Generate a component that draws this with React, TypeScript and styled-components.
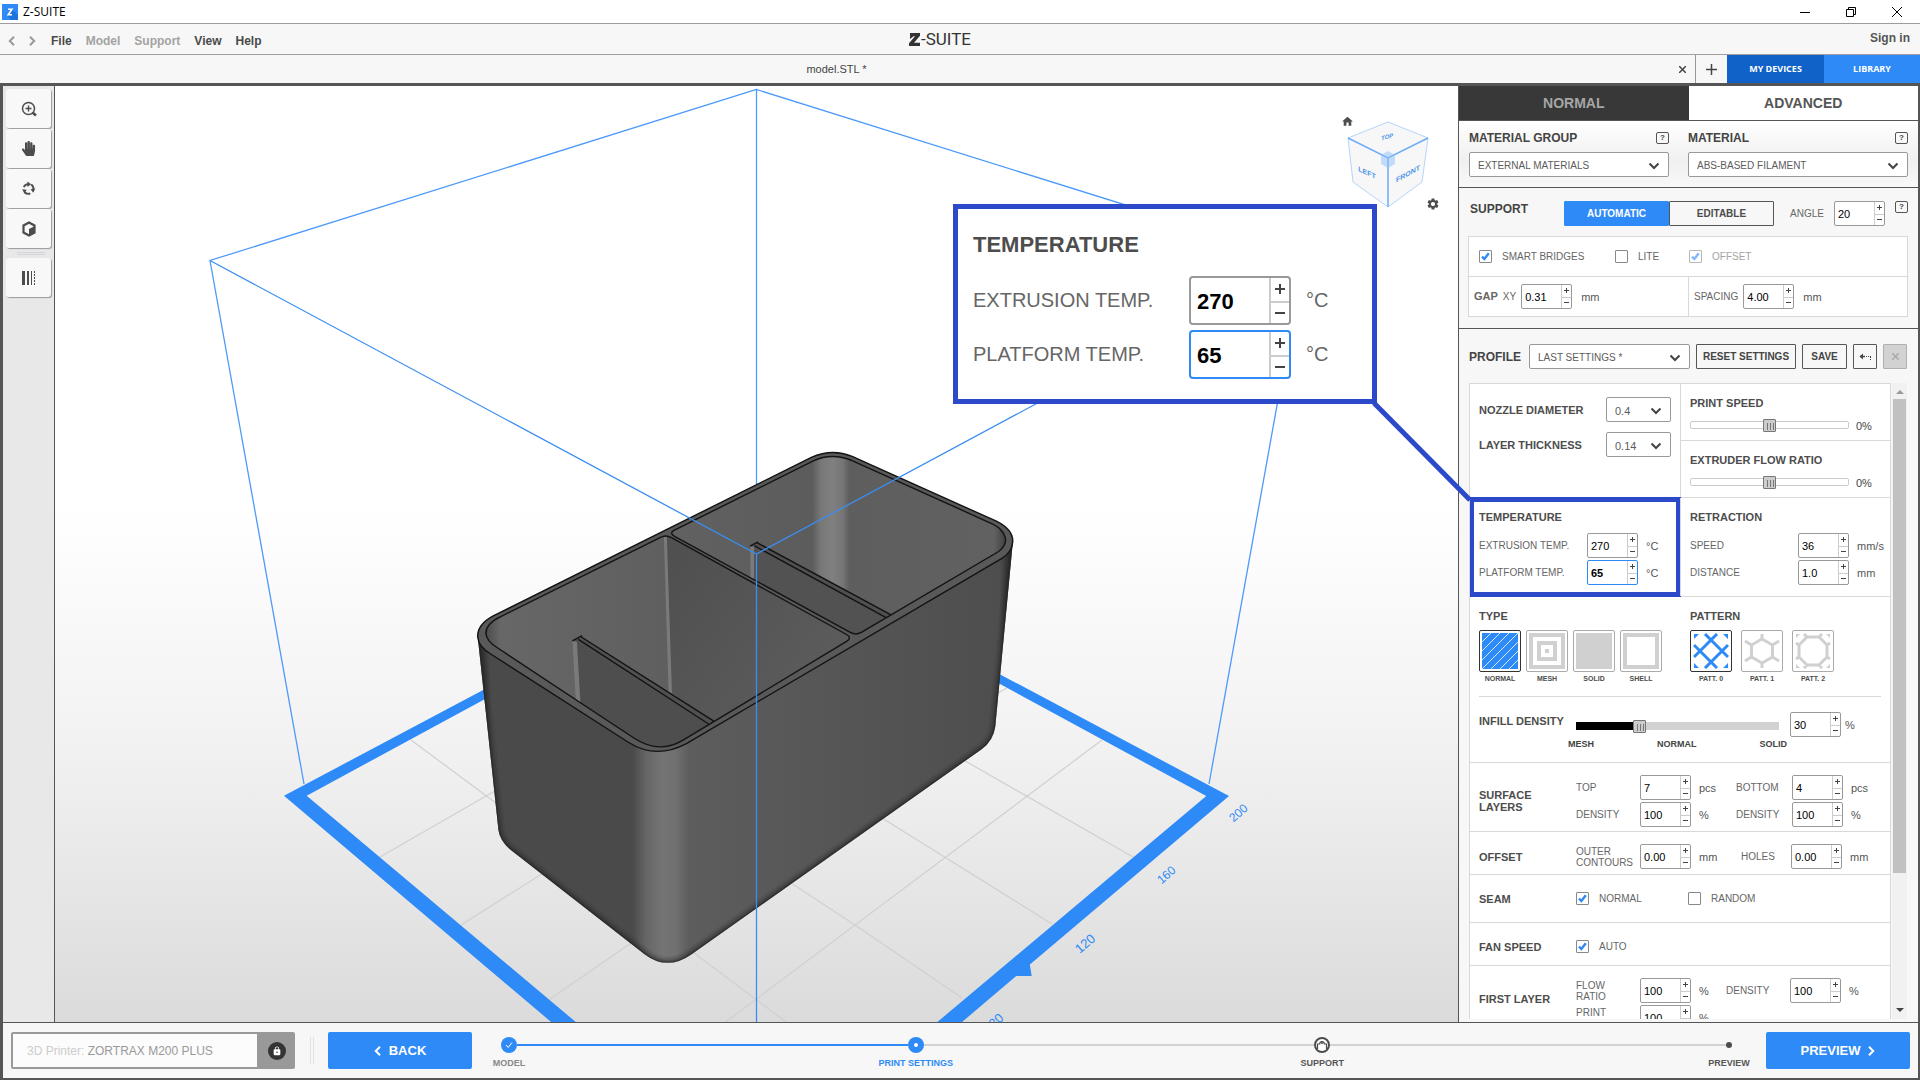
import React, { useId } from "react";
import styled, { createGlobalStyle, css } from "styled-components";
import { MdHome, MdSettings, MdLock } from "react-icons/md";
import { FaHandPaper } from "react-icons/fa";

const blue = "#2e8af7";
const navy = "#2b49c8";
const ink = "#444";
const frame = "#555";
const rule = "#d9d9d9";

const Global = createGlobalStyle`
  *, *::before, *::after { box-sizing: border-box; }
  body { margin: 0; background: #f7f7f7; }
  body, button, input, select { font-family: "Liberation Sans", Arial, sans-serif; }
  button { padding: 0; margin: 0; border: 0; background: none; color: inherit; cursor: pointer; }
`;

/* ---------- Window frame ---------- */

const Window = styled.div`
  display: flex;
  flex-direction: column;
  height: 100vh;
  overflow: hidden;
  color: ${ink};
  font-size: 11px;
`;

const TitleBar = styled.header`
  display: flex;
  align-items: center;
  flex: none;
  height: 24px;
  padding-left: 2px;
  gap: 5px;
  background: #fff;
  border-bottom: 1px solid #9c9c9c;
`;

const WindowTitle = styled.h1`
  flex: 1;
  margin: 0;
  color: #000;
  font: 400 12px/20px "Open Sans", "Noto Sans", sans-serif;
`;

const WindowButtons = styled.div`
  display: flex;
`;

const WindowButton = styled.button`
  display: grid;
  place-items: center;
  width: 46px;
  height: 20px;
`;

const MenuBar = styled.nav`
  display: grid;
  grid-template-columns: 1fr auto 1fr;
  align-items: center;
  flex: none;
  height: 31px;
  padding: 0 10px 0 6px;
  border-bottom: 1px solid #a0a0a0;
`;

const MenuGroup = styled.div`
  display: flex;
  align-items: center;
  gap: 14px;
  padding-top: 4px;
`;

const Arrows = styled.div`
  display: flex;
  gap: 11px;
  color: #999;
`;

const ArrowButton = styled.button`
  display: grid;
  width: 10px;
  height: 14px;
  place-items: center;
`;

const MenuItem = styled.button<{ $muted?: boolean }>`
  font-size: 12px;
  font-weight: 700;
  color: ${(p) => (p.$muted ? "#a3a3a3" : "#4a4a4a")};
`;

const SignIn = styled.a`
  justify-self: end;
  padding-bottom: 2px;
  color: #555;
  font-size: 12px;
  font-weight: 700;
  text-decoration: none;
`;

const Brand = styled.div`
  display: flex;
  align-items: center;
  gap: 1px;
  margin-right: 36px;
  color: #333;
  font: 400 17px/20px Roboto, sans-serif;
`;

const TabBar = styled.div`
  display: flex;
  flex: none;
  height: 28px;
`;

const FileTab = styled.div`
  display: flex;
  align-items: center;
  flex: 1;
  padding-left: 4px;
  border-right: 1px solid #999;
`;

const FileName = styled.button`
  flex: 1;
  height: 100%;
  font-size: 11px;
  color: #444;
`;

const TabIcon = styled.button<{ $w: number }>`
  display: grid;
  place-items: center;
  width: ${(p) => p.$w}px;
  height: 100%;
`;

const TopButton = styled.button<{ $bg: string; $w: number }>`
  width: ${(p) => p.$w}px;
  background: ${(p) => p.$bg};
  color: #fff;
  font: 700 9px/12px "Open Sans", sans-serif;
`;

const Frame = styled.div`
  display: flex;
  flex-direction: column;
  flex: 1;
  min-height: 0;
  border: solid ${frame};
  border-width: 3px 2px 2px 3px;
`;

const Main = styled.main`
  position: relative;
  display: grid;
  grid-template-columns: 52px minmax(0, 1fr) 460px;
  grid-template-rows: minmax(0, 1fr);
  flex: 1;
  min-height: 0;
`;

/* ---------- Left tools ---------- */

const Tools = styled.aside`
  display: flex;
  flex-direction: column;
  gap: 1px;
  padding: 3px;
  background: #e8e8e8;
  border-right: 1px solid ${frame};
`;

const ToolButton = styled.button`
  display: grid;
  place-items: center;
  height: 39px;
  border-radius: 3px;
  background: #f8f8f8;
  box-shadow: 1px 1px 1px #999;
  color: #4d4d4d;
`;

const ToolDivider = styled.div`
  width: 28px;
  height: 3px;
  margin: 3px auto 2px 11px;
  border: solid #d0d4d8;
  border-width: 1px 0;
`;

/* ---------- Viewport ---------- */

const Viewport = styled.section`
  position: relative;
  min-width: 0;
  overflow: hidden;
  background: linear-gradient(#fff 0%, #fff 45%, #f2f2f2 70%, #dbdbdb 100%);
`;

const Scene = styled.svg`
  display: block;
  width: 100%;
  height: 100%;
`;

const CubeWidget = styled.div`
  position: absolute;
  top: 28px;
  right: 18px;
  width: 102px;
  height: 98px;
  color: #4d4d4d;
`;

const CubeButton = styled.button<{ $corner: "home" | "gear" }>`
  position: absolute;
  display: grid;
  ${(p) => (p.$corner === "home" ? "top: 1px; left: 3px;" : "bottom: 1px; right: 0;")}
`;

const Callout = styled.div`
  position: absolute;
  top: 118px;
  right: 81px;
  width: 424px;
  height: 200px;
  padding: 23px 15px;
  border: 5px solid ${navy};
  background: #fff;
`;

const CalloutTitle = styled.h3`
  margin: 0 0 19px;
  font-size: 22px;
  line-height: 25px;
  color: #4d4d4d;
`;

const CalloutRow = styled.div`
  display: grid;
  grid-template-columns: 216px 102px 1fr;
  align-items: center;
  height: 49px;
  margin-bottom: 5px;
  color: #666;
  font-size: 20px;
  white-space: nowrap;
`;

const CalloutUnit = styled.span`
  padding-left: 15px;
  font-size: 20px;
`;

const Connector = styled.svg`
  position: absolute;
  top: 315px;
  right: 446px;
  pointer-events: none;
`;

/* ---------- Right panel ---------- */

const Panel = styled.aside`
  display: flex;
  flex-direction: column;
  min-height: 0;
  border-left: 1px solid ${frame};
  background: #f7f7f7;
`;

const ModeTabs = styled.div`
  display: grid;
  grid-template-columns: 1fr 1fr;
  flex: none;
  height: 35px;
  border-bottom: 1px solid ${frame};
`;

const ModeTab = styled.button<{ $dark?: boolean }>`
  font-size: 14px;
  font-weight: 700;
  color: ${(p) => (p.$dark ? "#a6a6a6" : "#555")};
  background: ${(p) => (p.$dark ? "#383838" : "#fff")};
`;

const Materials = styled.section`
  display: grid;
  grid-template-columns: 200px 1fr;
  column-gap: 19px;
  flex: none;
  height: 67px;
  padding: 9px 10px;
  border-bottom: 1px solid ${frame};
  background: linear-gradient(#fff, #f0f0f0 60%, #f8f8f8);
`;

const FieldHead = styled.div`
  display: flex;
  align-items: center;
  justify-content: space-between;
  height: 15px;
  margin-bottom: 7px;
`;

const Heading = styled.label`
  font-size: 12px;
  font-weight: 700;
  color: #444;
`;

const Help = styled.button`
  width: 13px;
  height: 12px;
  border: 1px solid #555;
  border-radius: 2px;
  font-size: 8px;
  line-height: 10px;
  font-weight: 700;
`;

const SelectBox = styled.div<{ $w?: number }>`
  display: grid;
  grid-template-columns: 1fr 29px;
  align-items: center;
  height: 25px;
  width: ${(p) => (p.$w ? `${p.$w}px` : "100%")};
  border: 1px solid #999;
  border-radius: 2px;
  background: #fff;
  svg { grid-area: 1 / 2; justify-self: center; margin-top: 2px; pointer-events: none; }
`;

const NativeSelect = styled.select<{ $size: number }>`
  grid-area: 1 / 1 / 2 / 3;
  width: 100%;
  height: 23px;
  padding: 2px 0 0 8px;
  border: 0;
  outline: 0;
  appearance: none;
  background: transparent;
  color: #5c5c5c;
  font-size: ${(p) => p.$size}px;
`;

const Support = styled.section`
  flex: none;
  height: 141px;
  padding: 13px 10px 0 9px;
  border-bottom: 1px solid ${frame};
`;

const SupportHead = styled.div`
  display: flex;
  align-items: flex-start;
  height: 35px;
`;

const SupportTitle = styled.h2`
  width: 94px;
  margin: 1px 0 0 2px;
  font-size: 12px;
  line-height: 14px;
`;

const Toggle = styled.button<{ $on?: boolean }>`
  width: 105px;
  height: 25px;
  border: 1px solid ${(p) => (p.$on ? blue : "#555")};
  border-radius: 1px;
  background: ${(p) => (p.$on ? blue : "transparent")};
  color: ${(p) => (p.$on ? "#fff" : "#4d4d4d")};
  font-size: 10px;
  font-weight: 700;
`;

const AngleLabel = styled.label`
  width: 60px;
  padding-left: 16px;
  font-size: 10px;
  line-height: 25px;
  color: #666;
`;

const HelpSlot = styled.div`
  display: flex;
  margin-left: auto;
`;

const SupportBox = styled.div`
  display: grid;
  grid-template-columns: 1fr 1fr;
  grid-template-rows: 40px 39px;
  border: 1px solid ${rule};
  background: #fff;
`;

const SupportChecks = styled.div`
  display: grid;
  grid-template-columns: 136px 74px auto;
  align-items: center;
  grid-column: 1 / 3;
  padding-left: 10px;
  border-bottom: 1px solid ${rule};
`;

const SupportCell = styled.div`
  display: flex;
  align-items: center;
  gap: 5px;
  padding-left: 5px;
  & + & { border-left: 1px solid ${rule}; }
`;

const Caption = styled.label<{ $strong?: boolean }>`
  font-size: ${(p) => (p.$strong ? 11 : 10)}px;
  font-weight: ${(p) => (p.$strong ? 700 : 400)};
  line-height: 11px;
  color: #666;
`;

const Unit = styled.span<{ $near?: boolean }>`
  padding-left: ${(p) => (p.$near ? 4 : 8)}px;
  font-size: 11px;
  color: #555;
`;

const SpinBox = styled.div<{ $big?: boolean; $active?: boolean }>`
  display: grid;
  grid-template-columns: 1fr ${(p) => (p.$big ? 20 : 10)}px;
  flex: none;
  width: ${(p) => (p.$big ? 102 : 51)}px;
  height: ${(p) => (p.$big ? 49 : 25)}px;
  border: ${(p) => (p.$big ? 2 : 1)}px solid ${(p) => (p.$active ? blue : "#999")};
  border-radius: ${(p) => (p.$big ? 4 : 2)}px;
  background: #fff;
`;

const SpinInput = styled.input<{ $big?: boolean; $bold?: boolean }>`
  width: 100%;
  min-width: 0;
  padding: ${(p) => (p.$big ? "2px 0 0 6px" : "1px 0 0 3px")};
  border: 0;
  outline: 0;
  background: transparent;
  color: #000;
  font-size: ${(p) => (p.$big ? 22 : 11)}px;
  font-weight: ${(p) => (p.$bold ? 700 : 400)};
`;

const SpinButtons = styled.div<{ $big?: boolean }>`
  display: grid;
  grid-template-rows: 1fr 1fr;
  border-left: ${(p) => (p.$big ? 2 : 1)}px solid #ccc;
  button { display: grid; place-items: center; }
  button + button { border-top: ${(p) => (p.$big ? 2 : 1)}px solid #ccc; }
`;

const CheckLabel = styled.label<{ $muted?: boolean }>`
  display: flex;
  align-items: center;
  gap: 10px;
  font-size: 10px;
  color: #666;
  opacity: ${(p) => (p.$muted ? 0.6 : 1)};
`;

const CheckSlot = styled.span`
  display: grid;
  place-items: center;
  width: 13px;
  height: 13px;
  input, svg { grid-area: 1 / 1; }
  svg { pointer-events: none; display: none; }
  input:checked + svg { display: block; }
`;

const NativeCheck = styled.input`
  appearance: none;
  width: 13px;
  height: 13px;
  margin: 0;
  border: 1px solid #888;
  border-radius: 1px;
  background: #fff;
`;

const Profile = styled.section`
  display: flex;
  flex-direction: column;
  flex: 1;
  min-height: 0;
  padding: 15px 10px 3px;
`;

const ProfileHead = styled.div`
  display: flex;
  align-items: center;
  gap: 6px;
  flex: none;
  height: 25px;
  margin-bottom: 14px;
`;

const ProfileTitle = styled(Heading)`
  width: 54px;
`;

const OutlineButton = styled.button<{ $w: number; $off?: boolean }>`
  display: grid;
  place-items: center;
  width: ${(p) => p.$w}px;
  height: 25px;
  border: 1px solid ${(p) => (p.$off ? "#b0b0b0" : "#555")};
  border-radius: 1px;
  background: ${(p) => (p.$off ? "#d2d2d2" : "transparent")};
  color: ${(p) => (p.$off ? "#aaa" : "#444")};
  font-size: 10px;
  font-weight: 700;
`;

const ScrollArea = styled.div`
  display: grid;
  grid-template-columns: 422px 15px;
  gap: 1px;
  flex: 1;
  min-height: 0;
`;

const Settings = styled.div`
  min-height: 0;
  overflow: hidden;
  border: solid ${rule};
  border-width: 1px 1px 0;
  background: #fff;
`;

const ScrollTrack = styled.div`
  display: flex;
  flex-direction: column;
  align-items: center;
  justify-content: space-between;
  padding: 6px 1px;
  background: #f1f1f1;
`;

const ScrollThumb = styled.div`
  width: 13px;
  flex: 0 0 76%;
  margin: 5px 0 auto;
  background: #c1c1c1;
`;

const Split = styled.div<{ $h: number }>`
  display: grid;
  grid-template-columns: minmax(0, 1fr) minmax(0, 1fr);
  height: ${(p) => p.$h}px;
  border-bottom: 1px solid ${rule};
`;

const Cell = styled.div<{ $pt: number }>`
  position: relative;
  padding: ${(p) => p.$pt}px 9px 0;
  & + & { padding-right: 0; border-left: 1px solid ${rule}; }
`;

const Highlight = styled.div`
  position: absolute;
  inset: -1px;
  border: 5px solid ${navy};
  pointer-events: none;
`;

const Stack = styled.div`
  display: grid;
  grid-template-rows: 56px 57px;
  border-left: 1px solid ${rule};
`;

const SpeedBlock = styled.div`
  padding: 12px 9px 0;
  & + & { border-top: 1px solid ${rule}; }
`;

const SubTitle = styled.h3`
  margin: 0;
  font-size: 11px;
  line-height: 14px;
  color: #4d4d4d;
`;

const SubLabel = styled.label`
  display: block;
  font-size: 11px;
  font-weight: 700;
  line-height: 14px;
  color: #4d4d4d;
`;

const SelectRow = styled.div`
  display: flex;
  align-items: center;
  justify-content: space-between;
  height: 25px;
  margin-bottom: 10px;
`;

const SliderRow = styled.div`
  display: flex;
  align-items: center;
  gap: 7px;
  height: 15px;
  margin-top: 7px;
  font-size: 11px;
  span { padding-top: 3px; }
`;

const Range = styled.input<{ $filled?: number }>`
  display: block;
  appearance: none;
  width: ${(p) => (p.$filled ? 203 : 159)}px;
  height: 13px;
  margin: ${(p) => (p.$filled ? "0 auto" : "0")};
  background: transparent;
  &::-webkit-slider-runnable-track {
    height: 8px;
    ${(p) =>
      p.$filled
        ? css`background: linear-gradient(90deg, #000 ${p.$filled}%, #d2d2d2 ${p.$filled}%);`
        : css`background: #fff; border: 1px solid #ccc; border-radius: 2px;`}
  }
  &::-webkit-slider-thumb {
    appearance: none;
    width: 13px;
    height: 13px;
    margin-top: ${(p) => (p.$filled ? -2 : -3)}px;
    border: 1px solid #777;
    border-radius: 1px;
    background:
      repeating-linear-gradient(90deg, #777 0 1px, transparent 1px 3px) 3px 3px / 7px 7px no-repeat,
      #ccc;
  }
`;

const ValueRow = styled.div`
  display: grid;
  grid-template-columns: 108px 51px 1fr;
  align-items: center;
  height: 25px;
  margin-bottom: 2px;
  white-space: nowrap;
`;

const TempBlock = styled.div`
  margin-top: 9px;
`;

const Infill = styled.div`
  padding: 12px 9px 0;
  height: 166px;
  border-bottom: 1px solid ${rule};
`;

const TileGroups = styled.div`
  display: grid;
  grid-template-columns: 211px 1fr;
  height: 88px;
  border-bottom: 1px solid ${rule};
`;

const Tiles = styled.div<{ $gap: number }>`
  display: flex;
  gap: ${(p) => p.$gap}px;
  margin-top: 7px;
`;

const TileButton = styled.button`
  display: flex;
  flex-direction: column;
  align-items: center;
  width: 42px;
  font-size: 7px;
  font-weight: 700;
  line-height: 14px;
  color: #4d4d4d;
`;

const TileFace = styled.span<{ $on?: boolean }>`
  display: grid;
  place-items: center;
  width: 42px;
  height: 42px;
  border: 1px solid ${(p) => (p.$on ? "#333" : "#aaa")};
  border-radius: 2px;
`;

const Density = styled.div`
  display: flex;
  padding-top: 15px;
`;

const DensityLabel = styled(SubLabel)`
  width: 89px;
  padding-top: 2px;
  white-space: nowrap;
`;

const DensitySlider = styled.div`
  width: 219px;
  padding-top: 7px;
  margin-right: 3px;
`;

const Scale = styled.div`
  display: flex;
  justify-content: space-between;
  margin-top: 6px;
  font-size: 9px;
  font-weight: 700;
  line-height: 12px;
`;

const DensityValue = styled.div`
  display: flex;
  align-items: center;
  height: 25px;
`;

const Row = styled.div<{ $h: number; $cols?: string }>`
  display: grid;
  grid-template-columns: 97px ${(p) => p.$cols ?? "112px 1fr"};
  align-content: start;
  align-items: center;
  row-gap: 2px;
  height: ${(p) => p.$h}px;
  padding: ${(p) => (p.$cols ? 12 : 17)}px 0 0 9px;
  border-bottom: 1px solid ${rule};
`;

const RowTitle = styled.h3<{ $span?: boolean; $raise?: boolean }>`
  width: 80px;
  margin: 0;
  padding-bottom: ${(p) => (p.$raise ? 10 : 0)}px;
  grid-row: ${(p) => (p.$span ? "1 / 3" : "auto")};
  font-size: 11px;
  line-height: 12px;
  color: #4d4d4d;
`;

const NextLine = styled.div`
  display: contents;
  & > label { grid-column: 2; width: 40px; }
`;

const Narrow = styled.div`
  display: contents;
  & > label:first-of-type { max-width: 58px; word-spacing: normal; white-space: pre-line; }
`;

/* ---------- Footer ---------- */

const Footer = styled.footer`
  display: flex;
  align-items: center;
  flex: none;
  height: 56px;
  padding: 0 8px;
  border-top: 1px solid ${frame};
`;

const Printer = styled.div`
  display: flex;
  align-items: center;
  width: 284px;
  height: 37px;
  padding: 2px;
  border-radius: 2px;
  background: #999;
`;

const PrinterName = styled.div`
  flex: 1;
  height: 33px;
  padding-left: 14px;
  background: #fcfcfc;
  font-size: 12px;
  line-height: 34px;
  color: #999;
  span { color: #ccc; }
`;

const LockButton = styled.button`
  display: grid;
  place-items: center;
  width: 18px;
  height: 18px;
  margin: 0 7px 0 11px;
  border-radius: 50%;
  background: #333;
  color: #fff;
`;

const FootDivider = styled.div`
  width: 4px;
  height: 27px;
  margin: 0 14px 0 15px;
  border: solid #e2e2e2;
  border-width: 0 1px;
`;

const BigButton = styled.button`
  display: flex;
  align-items: center;
  justify-content: center;
  gap: 8px;
  width: 144px;
  height: 37px;
  border-radius: 2px;
  background: ${blue};
  color: #fff;
  font-size: 13px;
  font-weight: 700;
`;

const Stepper = styled.ol`
  display: flex;
  flex: 1;
  height: 37px;
  margin: 0 29px;
  padding: 5px 0 0;
  list-style: none;
`;

const Step = styled.li<{ $color: string }>`
  display: flex;
  flex-direction: column;
  align-items: center;
  gap: 4px;
  flex: none;
  width: 16px;
  color: ${(p) => p.$color};
  font-size: 9px;
  font-weight: 700;
  line-height: 12px;
  white-space: nowrap;
  svg { display: block; flex: none; }
`;

const Track = styled.li<{ $on?: boolean }>`
  flex: 1;
  height: 2px;
  margin: 7px 0 0;
  background: ${(p) => (p.$on ? blue : "#d2d2d2")};
`;

/* ---------- Small drawings ---------- */

const Chevron = () => (
  <svg width="12" height="8" viewBox="0 0 12 8" fill="none" stroke="#444" strokeWidth="2">
    <path d="M1.5 1.5 6 6l4.5-4.5" />
  </svg>
);

const Angle = ({ dir }: { dir: "left" | "right" }) => (
  <svg width="7" height="10" viewBox="0 0 7 10" fill="none" stroke="currentColor" strokeWidth="2">
    <path d={dir === "left" ? "M6 .8 1.8 5 6 9.2" : "M1 .8 5.2 5 1 9.2"} />
  </svg>
);

const Cross = () => (
  <svg width="7" height="7" stroke="currentColor" strokeWidth="1.5">
    <path d="m0 0 7 7M7 0 0 7" />
  </svg>
);

const Sign = ({ minus, big }: { minus?: boolean; big?: boolean }) => (
  <svg width={big ? 10 : 5} height={big ? 10 : 5} viewBox="0 0 5 5" stroke="#444" strokeWidth="1">
    <path d={minus ? "M0 2.5h5" : "M0 2.5h5M2.5 0v5"} />
  </svg>
);

/* ---------- Controls ---------- */

function Dropdown({ id, value, w, size = 10 }: { id: string; value: string; w?: number; size?: number }) {
  return (
    <SelectBox $w={w}>
      <NativeSelect id={id} $size={size} defaultValue={value}>
        <option>{value}</option>
      </NativeSelect>
      <Chevron />
    </SelectBox>
  );
}

type SpinProps = { id: string; value: string; big?: boolean; active?: boolean; bold?: boolean };

function Spin({ id, value, big, active, bold }: SpinProps) {
  return (
    <SpinBox $big={big} $active={active}>
      <SpinInput id={id} defaultValue={value} $big={big} $bold={bold} inputMode="decimal" />
      <SpinButtons $big={big}>
        <button aria-label="Increase"><Sign big={big} /></button>
        <button aria-label="Decrease"><Sign minus big={big} /></button>
      </SpinButtons>
    </SpinBox>
  );
}

function Check({ label, on, off }: { label: string; on?: boolean; off?: boolean }) {
  return (
    <CheckLabel $muted={off}>
      <CheckSlot>
        <NativeCheck type="checkbox" defaultChecked={on} disabled={off} />
        <svg width="9" height="9" viewBox="0 0 9 9" fill="none" stroke={blue} strokeWidth="2.4">
          <path d="M1 4.6 3.4 7 7.8 1.2" />
        </svg>
      </CheckSlot>
      {label}
    </CheckLabel>
  );
}

function Field({ label, value, unit }: { label: string; value: string; unit: string }) {
  const id = useId();
  return (
    <>
      <Caption htmlFor={id}>{label}</Caption>
      <Spin id={id} value={value} />
      <Unit>{unit}</Unit>
    </>
  );
}

function Speed({ label }: { label: string }) {
  const id = useId();
  return (
    <SpeedBlock>
      <SubLabel htmlFor={id}>{label}</SubLabel>
      <SliderRow>
        <Range id={id} type="range" min={-50} max={50} defaultValue={0} />
        <span>0%</span>
      </SliderRow>
    </SpeedBlock>
  );
}

function Tile({ label, on, children }: { label: string; on?: boolean; children: React.ReactNode }) {
  return (
    <TileButton aria-pressed={!!on}>
      <TileFace $on={on}>
        <svg width="36" height="36" viewBox="0 0 36 36" fill="none">{children}</svg>
      </TileFace>
      {label}
    </TileButton>
  );
}

/* ---------- Viewport drawing ---------- */

const body =
  "M48 590Q46 555 90 530L950 78Q1005 52 1060 75L1450 260Q1497 285 1494 325L1447 845Q1442 885 1410 910L625 1495Q560 1543 500 1495L135 1195Q108 1170 104 1140Z";
const bodyEdge =
  "M1494 325L1447 845Q1442 885 1410 910L625 1495Q560 1543 500 1495L135 1195Q108 1170 104 1140L48 590";
const leftBay =
  "M545 305L110 532Q70 552 70 580Q72 602 100 620L470 878Q537 925 602 885L1046 602Q1060 592 1045 583L572 307Q558 298 545 305Z";
const rightBay =
  "M577 287Q566 295 580 303L1055 577Q1070 586 1085 577L1455 347Q1492 318 1460 282Q1455 276 1440 268L1060 87Q1005 64 955 88Z";

function SceneDrawing() {
  return (
    <Scene viewBox="55 86 1403 936" preserveAspectRatio="xMidYMid slice" role="img" aria-label="Model on the build platform">
      <defs>
        <linearGradient id="shell" gradientUnits="userSpaceOnUse" x1="48" y1="0" x2="1494" y2="0">
          <stop offset="0" stopColor="#2e2e2e" />
          <stop offset=".025" stopColor="#4a4a4a" />
          <stop offset=".29" stopColor="#4a4a4a" />
          <stop offset=".315" stopColor="#666" />
          <stop offset=".345" stopColor="#747474" />
          <stop offset=".37" stopColor="#707070" />
          <stop offset=".395" stopColor="#5d5d5d" />
          <stop offset=".7" stopColor="#555" />
          <stop offset=".975" stopColor="#4e4e4e" />
          <stop offset="1" stopColor="#2c2c2c" />
        </linearGradient>
        <linearGradient id="bayA" gradientUnits="userSpaceOnUse" x1="70" y1="0" x2="560" y2="0">
          <stop offset="0" stopColor="#4c4c4c" />
          <stop offset=".08" stopColor="#676767" />
          <stop offset="1" stopColor="#5f5f5f" />
        </linearGradient>
        <linearGradient id="bayWall" gradientUnits="userSpaceOnUse" x1="570" y1="400" x2="1000" y2="700">
          <stop offset="0" stopColor="#505050" />
          <stop offset="1" stopColor="#5c5c5c" />
        </linearGradient>
        <linearGradient id="bayB" gradientUnits="userSpaceOnUse" x1="570" y1="0" x2="1480" y2="0">
          <stop offset="0" stopColor="#616161" />
          <stop offset=".42" stopColor="#5c5c5c" />
          <stop offset=".445" stopColor="#777" />
          <stop offset=".48" stopColor="#808080" />
          <stop offset=".51" stopColor="#767676" />
          <stop offset=".53" stopColor="#5e5e5e" />
          <stop offset=".96" stopColor="#616161" />
          <stop offset="1" stopColor="#3c3c3c" />
        </linearGradient>
        <clipPath id="bodyClip"><path d={body} /></clipPath>
        <clipPath id="leftClip"><path d={leftBay} /></clipPath>
        <clipPath id="rightClip"><path d={rightBay} /></clipPath>
      </defs>

      <g stroke="#d0d0d0" strokeWidth="1.2" fill="none">
        <path d="M411 740 500 806M380 857 500 788M461 925 545 872M550 999 650 930M725.6 1022 1102 740" />
        <path d="M882 818 1052 924M960 758 1133 857M785 879 855 925 962 998M690 950 786 1022M996 694 1007 688" />
      </g>
      <path
        fill={blue}
        fillRule="evenodd"
        d="M284 795.7 756.5 545 1229 796 756.5 1196ZM306.7 795.7 756.5 1174 1206.3 796 756.5 552Z"
      />
      <path fill={blue} d="M1016 976h15.7l-2-12-6-4z" />
      <path d="M756.5 500V89.5L210 260.5 304 784M756.5 89.5 1303 260.5 1209 784" fill="none" stroke="#4c9afb" strokeWidth="1.3" />
      <g fill={blue} fontFamily="Liberation Sans, Arial, sans-serif" fontSize="13" textAnchor="middle">
        <text transform="translate(1241 816) rotate(-41)" fontSize="12">200</text>
        <text transform="translate(1169 878) rotate(-41)" fontSize="12">160</text>
        <text transform="translate(1088 947) rotate(-41)">120</text>
        <text transform="translate(999 1024) rotate(-41)">80</text>
      </g>

      <g transform="translate(460 430) scale(.3699 .3508)">
        <path d={body} fill="url(#shell)" />
        <g clipPath="url(#bodyClip)" fill="none" stroke="#222">
          <path d={bodyEdge} strokeWidth="36" opacity=".1" />
          <path d={bodyEdge} strokeWidth="24" opacity=".18" />
          <path d={bodyEdge} strokeWidth="14" opacity=".25" />
          <path d={bodyEdge} strokeWidth="7" opacity=".5" />
        </g>
        <path
          d="M48 590Q46 555 90 530L950 78Q1005 52 1060 75L1450 260Q1497 285 1494 320Q1492 348 1465 366L612 894Q530 940 455 890L85 640Q50 618 48 590Z"
          fill="#595959"
          stroke="#141414"
          strokeWidth="4"
        />
        <g clipPath="url(#leftClip)">
          <path d={leftBay} fill="url(#bayA)" />
          <path d="M555 290 1100 600 700 860 570 745Z" fill="url(#bayWall)" />
          <path d="M551 300h8l14 450h-9Z" fill="#7a7a7a" />
          <path d="M314 602 680 835 560 940 322 790Z" fill="#4e4e4e" />
          <path d="M304 602h12l10 185h-12Z" fill="#7a7a7a" />
          <path d="M308 600 328 588 690 832 670 842Z" fill="#505050" />
          <path d="M304 601 330 586M320 597 672 838M328 590 686 830" fill="none" stroke="#141414" strokeWidth="4" />
        </g>
        <g clipPath="url(#rightClip)">
          <path d={rightBay} fill="url(#bayB)" />
          <path d="M794 330 1155 532 1070 590 790 425Z" fill="#525252" />
          <path d="M785 333h10v90h-10Z" fill="#7a7a7a" />
          <path d="M790 330 806 320 1165 525 1150 535Z" fill="#505050" />
          <path d="M784 331 806 319M796 330 1152 535M804 322 1164 526" fill="none" stroke="#141414" strokeWidth="4" />
        </g>
        <path d={leftBay} fill="none" stroke="#141414" strokeWidth="4" />
        <path d={rightBay} fill="none" stroke="#141414" strokeWidth="4" />
      </g>
      <path d="M210 260.5 756.5 554 1303 260.5M756.5 554V1022" fill="none" stroke="#3a8ef2" strokeWidth="1.3" />
    </Scene>
  );
}

function ViewCube() {
  return (
    <CubeWidget>
      <svg width="102" height="98" viewBox="0 0 102 98">
        <path d="M50 8 90 24 84 68 50 93 15 68 10 24Z" fill="#f7f7f7" stroke="#b5d5fb" />
        <path d="M10 24 50 44 90 24M50 44v49" fill="none" stroke="#6cacf7" strokeWidth="1.5" />
        <path d="M43 41l7-4 7 4v9l-7 4-7-4Z" fill="#8bbffb" opacity=".5" />
        <g fill="#4b94e8" fontFamily="Liberation Sans, Arial, sans-serif" fontWeight="700" textAnchor="middle">
          <text transform="translate(49 25) rotate(-14) skewX(-20)" fontSize="6">TOP</text>
          <text transform="translate(29 61) skewY(25)" fontSize="7">LEFT</text>
          <text transform="translate(70 62) skewY(-28)" fontSize="7">FRONT</text>
        </g>
      </svg>
      <CubeButton $corner="home" aria-label="Home view"><MdHome size={13} /></CubeButton>
      <CubeButton $corner="gear" aria-label="View settings"><MdSettings size={14} /></CubeButton>
    </CubeWidget>
  );
}

/* ---------- Page ---------- */

export default function App() {
  return (
    <Window>
      <Global />
      <TitleBar>
        <svg width="16" height="16" viewBox="0 0 16 16">
          <path fill={blue} d="M0 0h16v16H0z" />
          <path fill="#1f74dc" d="m10 5 6 6v5H9l-3-4z" />
          <path d="M6 5.2h4L6.2 10.8H10" fill="none" stroke="#fff" strokeWidth="1.6" />
        </svg>
        <WindowTitle>Z-SUITE</WindowTitle>
        <WindowButtons>
          <WindowButton aria-label="Minimize">
            <svg width="10" height="10" stroke="#000"><path d="M0 5.5h10" /></svg>
          </WindowButton>
          <WindowButton aria-label="Restore">
            <svg width="10" height="10" fill="none" stroke="#000"><path d="M.5 2.5h7v7h-7zM2.5 2.5v-2h7v7h-2" /></svg>
          </WindowButton>
          <WindowButton aria-label="Close">
            <svg width="10" height="10" stroke="#000"><path d="m0 0 10 10M10 0 0 10" /></svg>
          </WindowButton>
        </WindowButtons>
      </TitleBar>

      <MenuBar>
        <MenuGroup>
          <Arrows>
            <ArrowButton aria-label="Undo"><Angle dir="left" /></ArrowButton>
            <ArrowButton aria-label="Redo"><Angle dir="right" /></ArrowButton>
          </Arrows>
          <MenuItem>File</MenuItem>
          <MenuItem $muted>Model</MenuItem>
          <MenuItem $muted>Support</MenuItem>
          <MenuItem>View</MenuItem>
          <MenuItem>Help</MenuItem>
        </MenuGroup>
        <Brand>
          <svg width="11" height="13" viewBox="0 0 11 12" preserveAspectRatio="none" fill="#333">
            <path d="M1 0h10v2.5L5 9h6v3H0V9.5L6 3H4.5L1 5.5z" />
          </svg>
          <span>-SUITE</span>
        </Brand>
        <SignIn href="#signin">Sign in</SignIn>
      </MenuBar>

      <TabBar>
        <FileTab>
          <FileName>model.STL *</FileName>
          <TabIcon $w={26} aria-label="Close tab"><Cross /></TabIcon>
        </FileTab>
        <TabIcon $w={31} aria-label="New tab">
          <svg width="11" height="11" stroke="#444" strokeWidth="1.5"><path d="M0 5.5h11M5.5 0v11" /></svg>
        </TabIcon>
        <TopButton $bg="#1062c8" $w={97}>MY DEVICES</TopButton>
        <TopButton $bg={blue} $w={96}>LIBRARY</TopButton>
      </TabBar>

      <Frame>
        <Main>
          <Tools>
            <ToolButton aria-label="Zoom">
              <svg width="16" height="16" viewBox="0 0 16 16" fill="none" stroke="currentColor" strokeWidth="1.5">
                <circle cx="7.5" cy="7.5" r="6" />
                <path d="M7.5 4.5v6M4.5 7.5h6" />
                <path d="m11.500 11.500 3.500 3" strokeWidth="2.6" />
              </svg>
            </ToolButton>
            <ToolButton aria-label="Pan"><FaHandPaper size={15} /></ToolButton>
            <ToolButton aria-label="Rotate">
              <svg width="15" height="15" viewBox="0 0 16 16" fill="none" stroke="currentColor" strokeWidth="2">
                <path d="M3 6.500A5.200 5.200 0 0 1 7.500 3.300M10.800 3.800A5.200 5.200 0 0 1 13.200 9M10 13.200A5.200 5.200 0 0 1 4 12" />
                <path d="m6.800.5 4 2.900-4 2.900zM15.300 8 13 12.500 10.200 8.800zM1.300 8.900l4.700.3-2.300 4.300z" fill="currentColor" stroke="none" />
              </svg>
            </ToolButton>
            <ToolButton aria-label="View">
              <svg width="16" height="16" viewBox="0 0 16 16">
                <path d="M8 1.500 13.500 4.500v7L8 14.500l-5.500-3v-7z" fill="none" stroke="currentColor" strokeWidth="2.2" />
                <path d="M8 8 14 5v7l-6 3.200z" fill="currentColor" />
              </svg>
            </ToolButton>
            <ToolDivider />
            <ToolButton aria-label="Layers">
              <svg width="14" height="14" viewBox="0 0 14 14" stroke="currentColor">
                <path d="M1.500 0v14" strokeWidth="3" />
                <path d="M6 0v14" strokeWidth="2" />
                <path d="M9.500 0v14" />
                <path d="M12.500 0v14" strokeDasharray="2 1" />
              </svg>
            </ToolButton>
          </Tools>

          <Viewport>
            <SceneDrawing />
            <ViewCube />
            <Callout>
              <CalloutTitle>TEMPERATURE</CalloutTitle>
              <CalloutRow>
                <label htmlFor="big-extrusion">EXTRUSION TEMP.</label>
                <Spin id="big-extrusion" value="270" big bold />
                <CalloutUnit>°C</CalloutUnit>
              </CalloutRow>
              <CalloutRow>
                <label htmlFor="big-platform">PLATFORM TEMP.</label>
                <Spin id="big-platform" value="65" big bold active />
                <CalloutUnit>°C</CalloutUnit>
              </CalloutRow>
            </Callout>
          </Viewport>

          <Panel>
            <ModeTabs>
              <ModeTab $dark>NORMAL</ModeTab>
              <ModeTab>ADVANCED</ModeTab>
            </ModeTabs>

            <Materials>
              <div>
                <FieldHead>
                  <Heading htmlFor="group">MATERIAL GROUP</Heading>
                  <Help>?</Help>
                </FieldHead>
                <Dropdown id="group" value="EXTERNAL MATERIALS" />
              </div>
              <div>
                <FieldHead>
                  <Heading htmlFor="material">MATERIAL</Heading>
                  <Help>?</Help>
                </FieldHead>
                <Dropdown id="material" value="ABS-BASED FILAMENT" />
              </div>
            </Materials>

            <Support>
              <SupportHead>
                <SupportTitle>SUPPORT</SupportTitle>
                <Toggle $on>AUTOMATIC</Toggle>
                <Toggle>EDITABLE</Toggle>
                <AngleLabel htmlFor="angle">ANGLE</AngleLabel>
                <Spin id="angle" value="20" />
                <HelpSlot><Help>?</Help></HelpSlot>
              </SupportHead>
              <SupportBox>
                <SupportChecks>
                  <Check label="SMART BRIDGES" on />
                  <Check label="LITE" />
                  <Check label="OFFSET" on off />
                </SupportChecks>
                <SupportCell>
                  <Caption as="span" $strong>GAP</Caption>
                  <Caption htmlFor="gap">XY</Caption>
                  <Spin id="gap" value="0.31" />
                  <Unit $near>mm</Unit>
                </SupportCell>
                <SupportCell>
                  <Caption htmlFor="spacing">SPACING</Caption>
                  <Spin id="spacing" value="4.00" />
                  <Unit $near>mm</Unit>
                </SupportCell>
              </SupportBox>
            </Support>

            <Profile>
              <ProfileHead>
                <ProfileTitle htmlFor="profile">PROFILE</ProfileTitle>
                <Dropdown id="profile" value="LAST SETTINGS *" w={161} />
                <OutlineButton $w={100}>RESET SETTINGS</OutlineButton>
                <OutlineButton $w={45}>SAVE</OutlineButton>
                <OutlineButton $w={24} aria-label="Import">
                  <svg width="13" height="8" viewBox="0 0 13 8" fill="none" stroke="currentColor">
                    <path d="M1 3.500h5" strokeWidth="1.5" />
                    <path d="M4 .5v6l-3.500-3z" fill="currentColor" stroke="none" />
                    <path d="M7 3.500h5M11.500 4v4" strokeDasharray="1 1" />
                  </svg>
                </OutlineButton>
                <OutlineButton $w={24} $off disabled aria-label="Delete"><Cross /></OutlineButton>
              </ProfileHead>

              <ScrollArea>
                <Settings>
                  <Split $h={114}>
                    <Cell $pt={13}>
                      <SelectRow>
                        <SubLabel htmlFor="nozzle">NOZZLE DIAMETER</SubLabel>
                        <Dropdown id="nozzle" value="0.4" w={65} size={11} />
                      </SelectRow>
                      <SelectRow>
                        <SubLabel htmlFor="layer">LAYER THICKNESS</SubLabel>
                        <Dropdown id="layer" value="0.14" w={65} size={11} />
                      </SelectRow>
                    </Cell>
                    <Stack>
                      <Speed label="PRINT SPEED" />
                      <Speed label="EXTRUDER FLOW RATIO" />
                    </Stack>
                  </Split>

                  <Split $h={99}>
                    <Cell $pt={12}>
                      <SubTitle>TEMPERATURE</SubTitle>
                      <TempBlock>
                        <ValueRow>
                          <Caption htmlFor="extrusion">EXTRUSION TEMP.</Caption>
                          <Spin id="extrusion" value="270" />
                          <Unit>°C</Unit>
                        </ValueRow>
                        <ValueRow>
                          <Caption htmlFor="platform">PLATFORM TEMP.</Caption>
                          <Spin id="platform" value="65" active bold />
                          <Unit>°C</Unit>
                        </ValueRow>
                      </TempBlock>
                      <Highlight />
                    </Cell>
                    <Cell $pt={12}>
                      <SubTitle>RETRACTION</SubTitle>
                      <TempBlock>
                        <ValueRow><Field label="SPEED" value="36" unit="mm/s" /></ValueRow>
                        <ValueRow><Field label="DISTANCE" value="1.0" unit="mm" /></ValueRow>
                      </TempBlock>
                    </Cell>
                  </Split>

                  <Infill>
                    <TileGroups>
                      <div>
                        <SubTitle>TYPE</SubTitle>
                        <Tiles $gap={5}>
                          <Tile label="NORMAL" on>
                            <path fill={blue} d="M0 0h36v36H0z" />
                            <path stroke="#d5e8ff" d="M0 9 9 0M0 18 18 0M0 27 27 0M0 36 36 0M9 36 36 9M18 36l18-18M27 36l9-9" />
                          </Tile>
                          <Tile label="MESH">
                            <path stroke="#d0d0d0" strokeWidth="4" d="M2 2h32v32H2zM10 10h16v16H10z" />
                            <path fill="#d0d0d0" d="M16 16h4v4h-4z" />
                          </Tile>
                          <Tile label="SOLID"><path fill="#d0d0d0" d="M0 0h36v36H0z" /></Tile>
                          <Tile label="SHELL"><path stroke="#d0d0d0" strokeWidth="4" d="M2 2h32v32H2z" /></Tile>
                        </Tiles>
                      </div>
                      <div>
                        <SubTitle>PATTERN</SubTitle>
                        <Tiles $gap={9}>
                          <Tile label="PATT. 0" on>
                            <path stroke={blue} strokeWidth="3" d="M24 1 1 24M35 12 12 35M12 1l23 23M1 12l23 23" />
                            <path fill={blue} d="M1 1h5L1 6zM35 1h-5l5 5zM1 35h5l-5-5zM35 35h-5l5-5z" />
                          </Tile>
                          <Tile label="PATT. 1">
                            <path stroke="#d0d0d0" strokeWidth="3" d="M18 6 28.500 12v12L18 30 7.500 24V12zM18 6V1M18 30v5M28.500 12 35 8M28.500 24l6.500 4M7.500 12 1 8M7.500 24 1 28" />
                          </Tile>
                          <Tile label="PATT. 2">
                            <path stroke="#d0d0d0" strokeWidth="3" d="M12 4h12l8 8v12l-8 8H12l-8-8V12zM12 4 9 1M24 4l3-3M32 12l3-2M32 24l3 2M24 32l3 3M12 32l-3 3M4 24l-3 2M4 12l-3-2" />
                            <path fill="#d0d0d0" d="M1 1h4L1 5zM35 1h-4l4 4zM1 35h4l-4-4zM35 35h-4l4-4z" />
                          </Tile>
                        </Tiles>
                      </div>
                    </TileGroups>
                    <Density>
                      <DensityLabel htmlFor="infill">INFILL DENSITY</DensityLabel>
                      <DensitySlider>
                        <Range id="infill" type="range" defaultValue={30} $filled={30} />
                        <Scale><span>MESH</span><span>NORMAL</span><span>SOLID</span></Scale>
                      </DensitySlider>
                      <DensityValue>
                        <Spin id="infill-value" value="30" />
                        <Unit $near as="label" htmlFor="infill-value">%</Unit>
                      </DensityValue>
                    </Density>
                  </Infill>

                  <Row $h={69} $cols="64px 51px 45px 56px 51px 1fr">
                    <RowTitle $span>SURFACE LAYERS</RowTitle>
                    <Field label="TOP" value="7" unit="pcs" />
                    <Field label="BOTTOM" value="4" unit="pcs" />
                    <Field label="DENSITY" value="100" unit="%" />
                    <Field label="DENSITY" value="100" unit="%" />
                  </Row>
                  <Row $h={43} $cols="64px 51px 50px 50px 51px 1fr">
                    <RowTitle>OFFSET</RowTitle>
                    <Field label="OUTER CONTOURS" value="0.00" unit="mm" />
                    <Field label="HOLES" value="0.00" unit="mm" />
                  </Row>
                  <Row $h={48}>
                    <RowTitle>SEAM</RowTitle>
                    <Check label="NORMAL" on />
                    <Check label="RANDOM" />
                  </Row>
                  <Row $h={43}>
                    <RowTitle>FAN SPEED</RowTitle>
                    <Check label="AUTO" on />
                  </Row>
                  <Row $h={77} $cols="64px 51px 35px 64px 51px 1fr">
                    <RowTitle $span $raise>FIRST LAYER</RowTitle>
                    <Narrow><Field label={"FLOW\nRATIO"} value="100" unit="%" /></Narrow>
                    <Field label="DENSITY" value="100" unit="%" />
                    <NextLine><Field label="PRINT SPEED" value="100" unit="%" /></NextLine>
                  </Row>
                </Settings>
                <ScrollTrack>
                  <svg width="8" height="5"><path d="M0 5 4 1l4 4z" fill="#999" /></svg>
                  <ScrollThumb />
                  <svg width="8" height="5"><path d="M0 0h8L4 4z" fill="#444" /></svg>
                </ScrollTrack>
              </ScrollArea>
            </Profile>
          </Panel>

          <Connector width="100" height="101" viewBox="0 0 100 101">
            <path d="m2 2 96 97" stroke={navy} strokeWidth="5" />
          </Connector>
        </Main>

        <Footer>
          <Printer>
            <PrinterName><span>3D Printer:</span> ZORTRAX M200 PLUS</PrinterName>
            <LockButton aria-label="Lock printer"><MdLock size={10} /></LockButton>
          </Printer>
          <FootDivider />
          <BigButton><Angle dir="left" />BACK</BigButton>
          <Stepper>
            <Step $color="#888">
              <svg width="16" height="16">
                <circle cx="8" cy="8" r="8" fill={blue} />
                <path d="m5 8 2.200 2.500L11 5.500" fill="none" stroke="#fff" />
              </svg>
              MODEL
            </Step>
            <Track $on />
            <Step $color={blue}>
              <svg width="16" height="16">
                <circle cx="8" cy="8" r="8" fill={blue} />
                <circle cx="8" cy="8" r="2" fill="#fff" />
              </svg>
              PRINT SETTINGS
            </Step>
            <Track />
            <Step $color="#555">
              <svg width="16" height="16">
                <circle cx="8" cy="8" r="7" fill="#fff" stroke="#4d4d4d" strokeWidth="2" />
                <path d="M4 7h8v5.500H4z" fill="#fff" />
                <path d="M3.500 12V7h2.200a2.300 2.300 0 0 1 4.600 0h2.200v5" fill="#fff" stroke="#4d4d4d" strokeWidth="1.2" />
                <circle cx="8" cy="6" r="1" fill="#4d4d4d" />
              </svg>
              SUPPORT
            </Step>
            <Track />
            <Step $color="#555">
              <svg width="16" height="16">
                <path d="M0 8h6" stroke="#d2d2d2" strokeWidth="2" />
                <circle cx="8" cy="8" r="3" fill="#4d4d4d" />
              </svg>
              PREVIEW
            </Step>
          </Stepper>
          <BigButton>PREVIEW<Angle dir="right" /></BigButton>
        </Footer>
      </Frame>
    </Window>
  );
}
